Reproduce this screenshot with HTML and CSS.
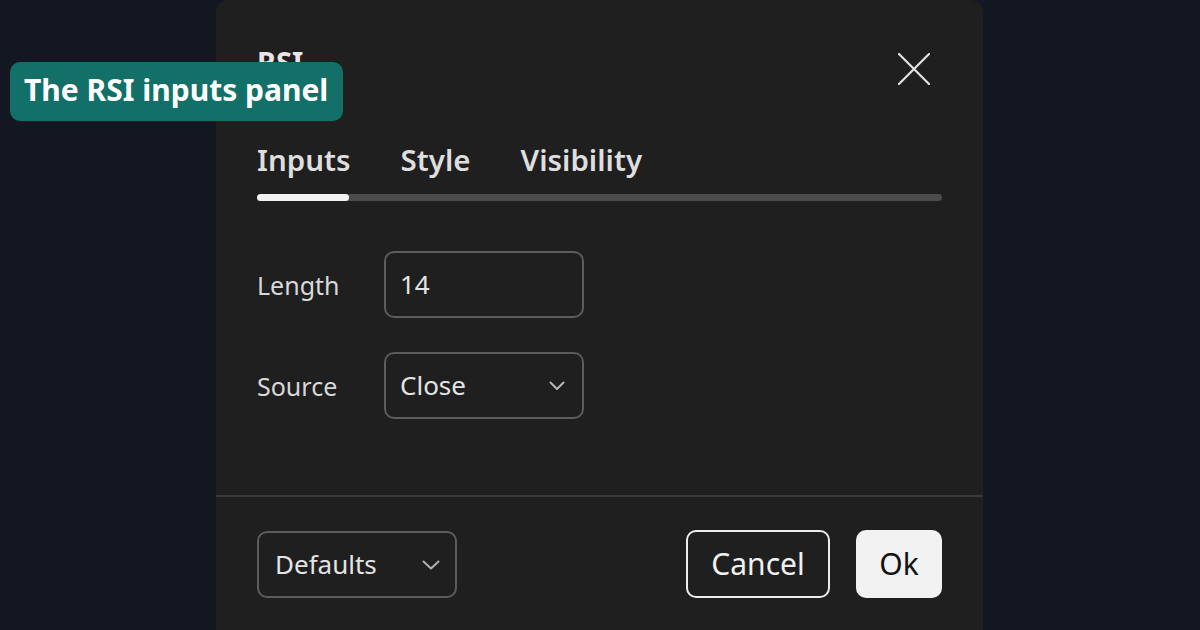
FILE: index.html
```html
<!DOCTYPE html>
<html lang="en">
  <head>
    <meta charset="UTF-8" />
    <meta name="viewport" content="width=device-width, initial-scale=1.0" />
    <title>RSI</title>
    <link rel="stylesheet" href="styles.css">
  </head>
  <body>
    <div class="page">
      <div class="callout">The RSI inputs panel</div>

      <section class="dialog">
        <header class="dialog-head">
          <h2 class="dialog-title">RSI</h2>
          <button type="button" class="btn-close" aria-label="Close">
            <svg width="32" height="32" viewBox="0 0 32 32">
              <path d="M1 1 L31 31 M31 1 L1 31" stroke="#e2e2e2" stroke-width="2.2" stroke-linecap="round" fill="none" />
            </svg>
          </button>
        </header>

        <nav class="tabs">
          <div class="tab-names">
            <span class="tab tab-active">Inputs</span>
            <span class="tab">Style</span>
            <span class="tab">Visibility</span>
          </div>
          <div class="tab-track"><div class="tab-thumb"></div></div>
        </nav>

        <div class="form-area">
          <div class="form-row">
            <span class="form-label">Length</span>
            <div class="field">14</div>
          </div>
          <div class="form-row">
            <span class="form-label">Source</span>
            <div class="field field-select">
              <span>Close</span>
              <svg class="chevron" width="16" height="10" viewBox="0 0 16 10">
                <path d="M1.5 1.5 L8 8 L14.5 1.5" stroke="#b8b8b8" stroke-width="2" fill="none" stroke-linecap="round" stroke-linejoin="round" />
              </svg>
            </div>
          </div>
        </div>

        <footer class="dialog-foot">
          <div class="field field-select field-defaults">
            <span>Defaults</span>
            <svg class="chevron" width="18" height="10" viewBox="0 0 18 10">
              <path d="M1.5 1.5 L9 8.5 L16.5 1.5" stroke="#b0b0b0" stroke-width="2" fill="none" stroke-linecap="round" stroke-linejoin="round" />
            </svg>
          </div>
          <div class="foot-actions">
            <button type="button" class="btn btn-cancel">Cancel</button>
            <button type="button" class="btn btn-ok">Ok</button>
          </div>
        </footer>
      </section>
    </div>
  </body>
</html>
```

FILE: styles.css
```css
* {
  box-sizing: border-box;
}

html,
body {
  margin: 0;
  padding: 0;
}

body {
  background: #131722;
  font-family: "Noto Sans", "Open Sans", sans-serif;
  color: #dcdcdc;
  overflow: hidden;
}

.page {
  position: relative;
  width: 1200px;
  height: 630px;
  overflow: hidden;
}

/* label floating over the dialog */
.callout {
  position: absolute;
  left: 10px;
  top: 62px;
  width: 333px;
  height: 59px;
  padding-left: 14px;
  background: #137069;
  border-radius: 10px;
  color: #fff;
  font-size: 30px;
  font-weight: 700;
  line-height: 56px;
  z-index: 2;
}

.dialog {
  margin-left: 216px;
  width: 767px;
  height: 660px;
  background: #1f1f1f;
  border-radius: 12px;
  display: flex;
  flex-direction: column;
}

.dialog-head {
  display: flex;
  justify-content: space-between;
  align-items: flex-start;
  padding: 40px 41px 0;
  height: 100px;
}

.dialog-title {
  margin: 0;
  font-size: 29px;
  font-weight: 700;
  line-height: 44px;
  color: #e6e6e6;
}

.btn-close {
  margin: 13px 12px 0 0;
  padding: 0;
  border: 0;
  background: none;
  width: 32px;
  height: 32px;
}

.btn-close svg {
  display: block;
}

.tabs {
  padding: 0 41px;
  margin-top: 40px;
}

.tab-names {
  display: flex;
  gap: 50px;
}

.tab {
  font-size: 29.5px;
  font-weight: 600;
  line-height: 40px;
  color: #dedede;
}

.tab-track {
  margin-top: 14px;
  height: 7px;
  border-radius: 4px;
  background: #4b4b4b;
}

.tab-thumb {
  width: 92px;
  height: 7px;
  border-radius: 4px;
  background: #f2f2f2;
}

.form-area {
  padding: 50px 41px 0;
  display: flex;
  flex-direction: column;
  gap: 34px;
  height: 294px;
}

.form-row {
  display: flex;
  align-items: center;
}

.form-label {
  width: 127px;
  font-size: 25px;
  color: #d8d8d8;
}

.field {
  width: 200px;
  height: 67px;
  border: 2px solid #5c5c5c;
  border-radius: 10px;
  padding: 0 14px;
  font-size: 26px;
  line-height: 63px;
  color: #e4e4e4;
}

.field-select {
  display: flex;
  align-items: center;
  justify-content: space-between;
  padding-right: 17px;
}

.chevron {
  display: block;
}

.dialog-foot {
  border-top: 2px solid #3a3a3a;
  padding: 33px 41px 0;
  display: flex;
  justify-content: space-between;
  align-items: flex-start;
}

.field-defaults {
  margin-top: 1px;
  padding-left: 16px;
  padding-right: 15px;
}

.foot-actions {
  display: flex;
  gap: 26px;
}

.btn {
  height: 68px;
  border-radius: 10px;
  font-family: "Noto Sans", "Open Sans", sans-serif;
  font-size: 30px;
  line-height: 62px;
  padding: 0;
}

.btn-cancel {
  width: 144px;
  background: #1f1f1f;
  border: 2px solid #ececec;
  color: #f0f0f0;
}

.btn-ok {
  width: 86px;
  background: #f2f2f2;
  border: 0;
  color: #131313;
}
```
